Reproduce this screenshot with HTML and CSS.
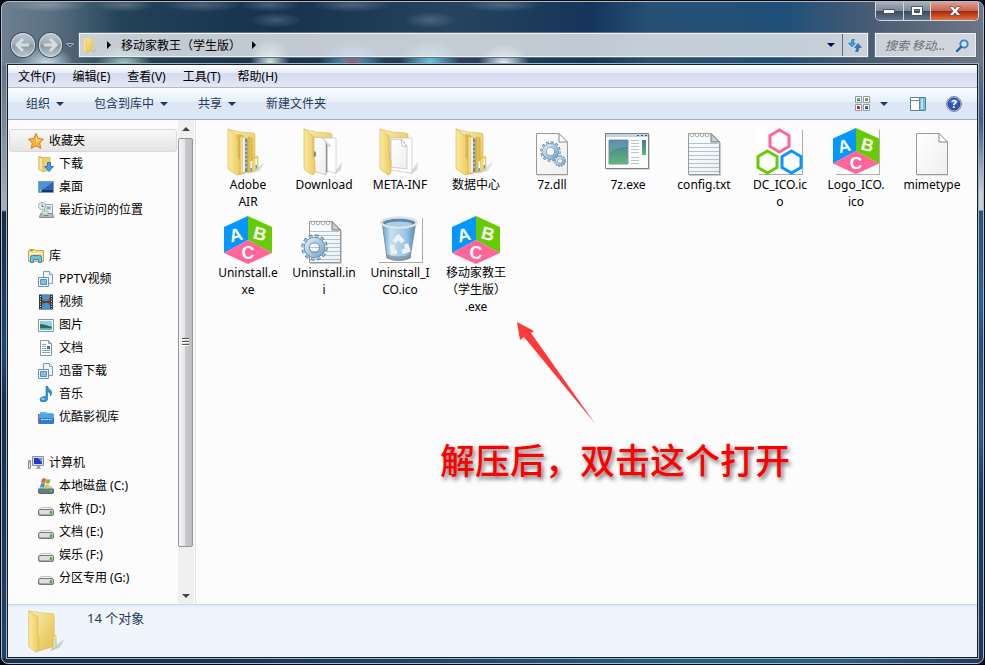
FILE: index.html
```html
<!DOCTYPE html>
<html lang="zh-CN">
<head>
    <meta charset="UTF-8">
    <meta name="viewport" content="width=device-width, initial-scale=1.0">
    <title>移动家教王（学生版）</title>
    <link rel="stylesheet" href="styles.css">
</head>
<body>
    <!-- Shared icons -->
    <svg class="sprite" aria-hidden="true">
        <defs>
            <linearGradient id="gFolder" x1="0" y1="0" x2="1" y2="1">
                <stop offset="0" stop-color="#fbeeb0"/><stop offset="1" stop-color="#e2bf4a"/>
            </linearGradient>
            <linearGradient id="gFront" x1="0" y1="0" x2="1" y2="0">
                <stop offset="0" stop-color="#fbeaa0"/><stop offset="1" stop-color="#ecca5f"/>
            </linearGradient>
            <linearGradient id="gPaper" x1="0" y1="0" x2="1" y2="1">
                <stop offset="0" stop-color="#ffffff"/><stop offset="1" stop-color="#eeeeee"/>
            </linearGradient>
            <linearGradient id="gBlue" x1="0" y1="0" x2="1" y2="1">
                <stop offset="0" stop-color="#d4e8f7"/><stop offset="1" stop-color="#7fa9cc"/>
            </linearGradient>
            <linearGradient id="gScreen" x1="0" y1="0" x2="0" y2="1">
                <stop offset="0" stop-color="#3c78a4"/><stop offset="1" stop-color="#62b876"/>
            </linearGradient>
            <linearGradient id="gBin" x1="0" y1="0" x2="1" y2="0">
                <stop offset="0" stop-color="#5f9ac6"/><stop offset=".25" stop-color="#c5dff1"/><stop offset=".7" stop-color="#9cc6e4"/><stop offset="1" stop-color="#5287b3"/>
            </linearGradient>
            <linearGradient id="gDrive" x1="0" y1="0" x2="0" y2="1">
                <stop offset="0" stop-color="#e8e8ec"/><stop offset="1" stop-color="#9c9ca4"/>
            </linearGradient>
        </defs>
        <symbol id="folder-full" viewBox="0 0 48 48">
            <path d="M26 44l15-10-5 9-10 3z" fill="#999" opacity=".25"/>
            <path d="M4 1l12 3 13 1q2 0 2 2v34l-12 5z" fill="url(#gFolder)" stroke="#dcb954" stroke-width=".6"/>
            <path d="M13 6l6 1v39l-5 1z" fill="#dfb94e"/>
            <path d="M16 8l4 1v36l-4 1z" fill="#f5de8b" stroke="#b8963a" stroke-width=".5"/>
            <path d="M19 9l2 1v34l-2 1z" fill="#fff" stroke="#aaa" stroke-width=".4"/>
            <path d="M21 10l2.500 1v33H21z" fill="#7d8790"/><path d="M22 14v28" stroke="#dde6ec" stroke-dasharray="2 2"/>
            <path d="M24 9l4 1v33l-4 2z" fill="#e3bd50" stroke="#b8963a" stroke-width=".4"/>
            <path d="M30 30l3-2 1 1v12l-6 3v-12z" fill="#f1d66f" stroke="#cfa83c" stroke-width=".5"/>
            <path d="M26.500 33h1.500v9l-1.500 1zM31.500 31H33v8l-1.500 1z" fill="#fff"/><path d="M26.500 40H28v3l-1.500 1zM31.500 37H33v3l-1.500 1z" fill="#4c9fe8"/>
            <path d="M4 1l9 7 1 5v16l2 3v11q0 4-3 4L4 41z" fill="url(#gFront)" stroke="#d5b452" stroke-width=".6"/>
        </symbol>
        <symbol id="folder-pages" viewBox="0 0 48 48">
            <path d="M36 42l6-8-1 8-7 5z" fill="#888" opacity=".3"/>
            <path d="M4 1l12 3 14 1q2 0 2 2v28H10z" fill="url(#gFolder)" stroke="#dcb954" stroke-width=".6"/>
            <path d="M22 10h14v35l-9-2z" fill="#fff" stroke="#bbb" stroke-width=".6"/>
            <path d="M14 9l9 1 3 4v33l-12-4z" fill="url(#gPaper)" stroke="#aaa" stroke-width=".6"/>
            <path d="M25 13l6 5-4 0z" fill="#eee" stroke="#aaa" stroke-width=".5"/>
            <path d="M26 15l1.500 2v27L26 46z" fill="#999"/>
            <path d="M14 25l2-1v4l-2 1z" fill="#4aab57"/><path d="M14 23l1.500 1-1.500 2z" fill="#e85b31"/>
            <path d="M4 1l9 7v22l2 3v10q0 4-3 4L4 41z" fill="url(#gFront)" stroke="#d5b452" stroke-width=".6"/>
        </symbol>
        <symbol id="folder-page" viewBox="0 0 48 48">
            <path d="M36 42l6-8-1 8-7 5z" fill="#888" opacity=".3"/>
            <path d="M4 1l12 3 14 1q2 0 2 2v28H10z" fill="url(#gFolder)" stroke="#dcb954" stroke-width=".6"/>
            <path d="M15 10h21v35l-22-3z" fill="#fff" stroke="#bbb" stroke-width=".6"/>
            <path d="M15 12l10-1 6 7v23l-16-2z" fill="url(#gPaper)" stroke="#bbb" stroke-width=".7"/>
            <path d="M25 11l1 7 5 1z" fill="#fff" stroke="#aaa" stroke-width=".6"/>
            <path d="M4 1l9 7v22l2 3v10q0 4-3 4L4 41z" fill="url(#gFront)" stroke="#d5b452" stroke-width=".6"/>
        </symbol>
        <symbol id="folder-plain" viewBox="0 0 48 48">
            <path d="M28 44l15-11-5 9-10 4z" fill="#777" opacity=".3"/>
            <path d="M4 2l12 2 14 1q2 0 2 2v34l-18 5z" fill="url(#gFolder)" stroke="#dcb954" stroke-width=".6"/>
            <path d="M30 31l3-3 1 2v12l-4 1z" fill="#f6df87" stroke="#cfa83c" stroke-width=".5"/><path d="M31 33h1.500v6L31 40z" fill="#fff" stroke="#6bb1e8" stroke-width=".5"/>
            <path d="M4 2l10 7v20l1 2v12q0 4-3 4L4 41z" fill="url(#gFront)" stroke="#d5b452" stroke-width=".6"/>
        </symbol>
        <symbol id="cube" viewBox="0 0 48 48">
            <path d="M24 0v24L0 37V11z" fill="#0397ff"/>
            <path d="M24 0l24 11v26L24 24z" fill="#66cc01"/>
            <path d="M24 24l24 13-24 11L0 37z" fill="#ff6599"/>
        </symbol>
        <symbol id="sheet" viewBox="0 0 48 48">
            <path d="M9 6h22l9 9v33H9z" fill="#bbb" opacity=".4"/>
            <path d="M8.500 5.500h22l9 9v32h-31z" fill="url(#gPaper)" stroke="#999"/>
            <path d="M31 5.500v8.500h8.500z" fill="#fff" stroke="#888"/>
        </symbol>
        <symbol id="notepad" viewBox="0 0 48 48">
            <path d="M9 6h23l9 9v33H9z" fill="#999" opacity=".5"/>
            <path d="M8.500 5.500h22l9 9v32h-31z" fill="url(#gPaper)" stroke="#999"/>
            <path d="M9 15.500h29M9 19.500h30M9 23.500h30M9 27.500h30M9 31.500h30M9 35.500h30M9 39.500h30M9 43.500h30" stroke="#a9c6d8"/>
            <path d="M31 5.500v8.500h8.500z" fill="#ccc" stroke="#777"/>
            <g fill="#fff" stroke="#999" stroke-width=".8"><circle cx="12" cy="7" r="1.800"/><circle cx="17" cy="7" r="1.800"/><circle cx="22" cy="7" r="1.800"/><circle cx="27" cy="7" r="1.800"/></g>
        </symbol>
        <symbol id="gear" viewBox="0 0 24 24">
            <circle cx="12" cy="12" r="10" fill="none" stroke="#55738e" stroke-width="3.400" stroke-dasharray="3 2.236"/>
            <circle cx="12" cy="12" r="9.800" fill="none" stroke="#a5c9e2" stroke-width="2.400" stroke-dasharray="2.600 2.531"/>
            <circle cx="12" cy="12" r="6.800" fill="none" stroke="#5c7d9a" stroke-width="5.200"/>
            <circle cx="12" cy="12" r="6.800" fill="none" stroke="url(#gBlue)" stroke-width="4.200"/>
        </symbol>
        <symbol id="library" viewBox="0 0 16 16">
            <path d="M5.500.5h6l3 3v9h-9z" fill="#edf4fa" stroke="#7c9cb8"/>
            <path d="M11.500.5v3h3" fill="#fff" stroke="#7c9cb8"/>
            <path d="M.5 6.500h10v9H.5z" fill="#f7fbfe" stroke="#6f93b4"/>
            <path d="M2.500 8.500h6v5h-6z" fill="#82bff0" stroke="#4f8fcb"/>
        </symbol>
        <symbol id="drive" viewBox="0 0 16 16">
            <path d="M3 6.500h10l2 3H1z" fill="#f5f5f7" stroke="#b5b5ba" stroke-width=".8"/>
            <rect x=".5" y="8.500" width="15" height="6" rx="1.500" fill="url(#gDrive)" stroke="#77777d"/>
            <path d="M2 10h9v3H2z" fill="#dedee5"/><path d="M12 10h2v3h-2z" fill="#36c321"/>
        </symbol>
        <symbol id="caret" viewBox="0 0 8 4"><path d="M0 0h8L4 4z" fill="currentColor"/></symbol>
    </svg>

    <div class="window">
        <header class="titlebar">
            <div class="window-buttons">
                <button class="win-btn" aria-label="最小化"><svg width="12" height="5"><rect x=".5" y=".5" width="11" height="4" fill="#fff" stroke="#4b5568"/></svg></button>
                <button class="win-btn" aria-label="最大化"><svg width="12" height="10"><path d="M.5.5h11v9H.5zM3.500 3.500v3h5v-3z" fill="#fff" fill-rule="evenodd" stroke="#4b5568"/></svg></button>
                <button class="win-btn close" aria-label="关闭"><svg width="12" height="10"><path d="M1 .5h3L6 3 8 .5h3v1L8 5l3 3.500v1H8L6 7 4 9.500H1v-1L4 5 1 1.500z" fill="#fff" stroke="#5d4652" stroke-width=".8"/></svg></button>
            </div>
            <div class="nav-row">
                <div class="travel">
                    <button class="round" aria-label="后退"><svg width="16" height="14"><path d="M8 1L2 7l6 6M3 7h11" fill="none" stroke="#d5dde2" stroke-width="3"/></svg></button>
                    <button class="round" aria-label="前进"><svg width="16" height="14"><path d="M8 1l6 6-6 6M13 7H2" fill="none" stroke="#d5dde2" stroke-width="3"/></svg></button>
                    <button class="history" aria-label="最近浏览"><svg width="8" height="5"><path d="M.5.5h7L4 4z" fill="#4c6070" stroke="#a3b0ba"/></svg></button>
                </div>
                <div class="address">
                    <svg class="address-icon" width="16" height="16" viewBox="0 0 40 48"><use href="#folder-plain" width="48" height="48"/></svg>
                    <svg class="chevron" width="4" height="8"><path d="M0 0l4 4-4 4z"/></svg>
                    <button class="crumb">移动家教王（学生版）</button>
                    <svg class="chevron" width="4" height="8"><path d="M0 0l4 4-4 4z"/></svg>
                    <button class="address-drop" aria-label="以前的位置"><svg width="8" height="4"><use href="#caret"/></svg></button>
                    <button class="refresh" aria-label="刷新"><svg width="14" height="13"><path d="M6.500 0L4 .5Q3 2 3.500 4H.5L4 8l3.500-4H5.500Q5.500 2 6.500 0z" fill="#3a9be0" stroke="#2263a8" stroke-width=".5"/><path d="M7.500 13l2.500-.5q1-1.500.5-4h3L10 4.500 6.500 8.500h2q0 2.500-1 4.500z" fill="#2f7ccb" stroke="#1c4b93" stroke-width=".5"/></svg></button>
                </div>
                <div class="search">
                    <input type="text" placeholder="搜索 移动..." aria-label="搜索">
                    <svg width="13" height="13"><circle cx="8" cy="5" r="3.700" fill="#d3e8f5" stroke="#2b84cf" stroke-width="1.800"/><path d="M5 8l-4 4" stroke="#1d63ad" stroke-width="2.400" stroke-linecap="round"/></svg>
                </div>
            </div>
        </header>

        <div class="frame">
            <nav class="menubar">
                <button>文件(F)</button>
                <button>编辑(E)</button>
                <button>查看(V)</button>
                <button>工具(T)</button>
                <button>帮助(H)</button>
            </nav>
            <div class="toolbar">
                <button>组织 <svg width="8" height="4"><use href="#caret"/></svg></button>
                <button>包含到库中 <svg width="8" height="4"><use href="#caret"/></svg></button>
                <button>共享 <svg width="8" height="4"><use href="#caret"/></svg></button>
                <button>新建文件夹</button>
                <div class="view-tools">
                    <button aria-label="更改视图"><svg width="15" height="15"><g fill="#fff" stroke="#8e99a5"><path d="M.5.5h6v6h-6zM8.500.5h6v6h-6zM.5 8.500h6v6h-6zM8.500 8.500h6v6h-6z"/></g><path d="M2 2h3v3H2z" fill="#63b6a5"/><path d="M2 4h3v1H2z" fill="#176c45"/><path d="M10 2h3v3h-3z" fill="#5aa929"/><path d="M10 2h2v1h-2z" fill="#e6a02b"/><path d="M2 10h3v3H2z" fill="#a42b12"/><path d="M4 10h1v1H4z" fill="#f0b83c"/><path d="M10 10h3v3h-3z" fill="#3b78b8"/><path d="M10 12h3v1h-3z" fill="#222f56"/></svg></button>
                    <button class="view-drop" aria-label="更多选项"><svg width="8" height="4"><use href="#caret"/></svg></button>
                    <button class="preview" aria-label="显示预览窗格"><svg width="16" height="14"><path d="M.5.5h15v13H.5z" fill="#fff" stroke="#5b8199"/><path d="M10 1h5v12h-5z" fill="#6fc1de"/><path d="M11 2h2v10h-2z" fill="#b6e6f4"/><path d="M1 3.500h9M9.500 1v12" stroke="#6c899c"/></svg></button>
                    <button aria-label="获取帮助"><svg width="16" height="16"><circle cx="8" cy="8" r="7.500" fill="#d8dce5" stroke="#7c8496"/><circle cx="8" cy="8" r="6" fill="#2857bd" stroke="#183a8c"/><path d="M3 6q5-6 10 0-5 3-10 0z" fill="#7ba5e8" opacity=".6"/><text class="help-mark" x="8" y="12">?</text></svg></button>
                </div>
            </div>

            <div class="main">
                <aside class="sidebar">
                    <ul class="group">
                        <li><a class="root selected" href="#"><svg width="16" height="16"><path d="M8 .5l2.300 5 5.200.7-3.800 3.700 1 5.500L8 12.800l-4.700 2.600 1-5.500L.5 6.200l5.200-.7z" fill="#f9b43a" stroke="#d97d24"/><path d="M8 3l1.500 3.500 3 .6L8 9z" fill="#fde9a0"/></svg>收藏夹</a></li>
                        <li><a href="#"><svg width="16" height="16"><path d="M1 .5l4 1h7v13l-7 1-4-2z" fill="#efcf6c" stroke="#cfa94a" stroke-width=".7"/><path d="M1 .5l4 3v12l-4-2z" fill="#fbe9a2" stroke="#cfa94a" stroke-width=".7"/><path d="M9.500 6.500h3v4h3L11 15.500 6.500 10.500h3z" fill="#3d9fe6" stroke="#2168b0" stroke-width=".8"/></svg>下载</a></li>
                        <li><a href="#"><svg width="16" height="16"><path d="M.5 2.500h15v11H.5z" fill="#2a63b8" stroke="#8c9db3"/><path d="M1 3h14L4 11H1z" fill="#4f90dc"/><path d="M1 11h14v2H1z" fill="#20304f"/><path d="M1 10h3v3H1z" fill="#36a3d8"/><path d="M2 11h1v1H2z" fill="#ffd84a"/></svg>桌面</a></li>
                        <li><a href="#"><svg width="16" height="16"><path d="M6.500 2.500h8v9h-8z" fill="#e9eef2" stroke="#99a1a8"/><path d="M8.500 4.500h4v3h-4z" fill="#69b3da"/><path d="M2.500 11.500h12l1 4h-14z" fill="#b2b8bd" stroke="#858b90"/><path d="M4 9h6v4H4z" fill="#d8dde0" stroke="#959b9f" stroke-width=".6"/><path d="M6 13.500h4" stroke="#35b15c"/><circle cx="4" cy="4" r="3.500" fill="#f6f8f9" stroke="#9ba3aa"/><path d="M4 2v2.500h2" fill="none" stroke="#67707a"/></svg>最近访问的位置</a></li>
                    </ul>
                    <ul class="group">
                        <li><a class="root" href="#"><svg width="16" height="16"><path d="M.5 2.500l1-1h5l1 1h8v11H.5z" fill="#f2dc87" stroke="#c6a94f"/><path d="M2 2.500h3" stroke="#52ae3e"/><path d="M1 5.500h14" stroke="#fff6c9"/><path d="M2.500 14.500v-5q0-2 2-2h7q2 0 2 2v5h-3v-3h-5v3z" fill="#70bde6" stroke="#3c87bb"/></svg>库</a></li>
                        <li><a href="#"><svg width="16" height="16"><use href="#library"/></svg>PPTV视频</a></li>
                        <li><a href="#"><svg width="16" height="16"><path d="M1 .5h14v15H1z" fill="#303940"/><path d="M4 1h8v14H4z" fill="#3d96cc"/><path d="M4 4l4 4-4 3zM12 3L8 8l4 3z" fill="#ac5138"/><path d="M4 8h8" stroke="#222"/><path d="M2.500 2v13M13.500 2v13" stroke="#e9edf0" stroke-dasharray="1 1.500"/></svg>视频</a></li>
                        <li><a href="#"><svg width="16" height="16"><path d="M.5 2.500h15v12H.5z" fill="#fff" stroke="#8a9297"/><path d="M2 4h12v9H2z" fill="#8fd0ee"/><path d="M2 7q4 0 12 3v2H2z" fill="#28724d"/><path d="M2 11h12v2H2z" fill="#5fb2c3"/></svg>图片</a></li>
                        <li><a href="#"><svg width="16" height="16"><path d="M2.500.5h8l3 3v12h-11z" fill="#fff" stroke="#8996a0"/><path d="M10.500.5v3h3" fill="none" stroke="#8996a0"/><path d="M4 4.500h4M4 6.500h4M4 8.500h4M4 10.500h8M4 12.500h8" stroke="#8fa5bd"/><path d="M9 6h3v3H9z" fill="#2e74b5"/></svg>文档</a></li>
                        <li><a href="#"><svg width="16" height="16"><use href="#library"/></svg>迅雷下载</a></li>
                        <li><a href="#"><svg width="16" height="16"><path d="M8 0h1.500q.5 3 3 4 2.500 2.500 0 6 .5-3.500-3-4.500V13q0 2.500-4 3-3.500 0-3.500-2.500T6 10.500h2z" fill="#2b91da" stroke="#1c68ae" stroke-width=".6"/><ellipse cx="5" cy="13" rx="2" ry="1.300" fill="#76c5f2"/></svg>音乐</a></li>
                        <li><a href="#"><svg width="16" height="16"><path d="M2 3h6l1 1h6v6H2z" fill="#56b6ed"/><path d="M0 5h16v9q0 1-1 1H1q-1 0-1-1z" fill="#2b7dd6"/><path d="M1 5h15v4H1z" fill="#4ea3ea"/><path d="M0 6h1v8H0z" fill="#e3474c"/><path d="M3 10.500h11" stroke="#c5e5ff" stroke-dasharray="2 .5"/></svg>优酷影视库</a></li>
                    </ul>
                    <ul class="group">
                        <li><a class="root" href="#"><svg width="16" height="16"><path d="M4.500 1.500h11v9h-11z" fill="#d8dce0" stroke="#878f98"/><path d="M6 3h8v6H6z" fill="#1b3cc4"/><path d="M10 3h4v5z" fill="#6d94ee"/><path d="M9 11h3v2l2 1H7l2-1z" fill="#9da5ad"/><path d="M.5 5.500h2v8h-2z" fill="#dfe3e6" stroke="#858d95"/><path d="M1 7h1" stroke="#35b52b"/></svg>计算机</a></li>
                        <li><a href="#"><svg width="16" height="16"><rect x=".5" y="10.500" width="15" height="5" rx="1" fill="#587d91" stroke="#5b666e"/><path d="M2 8h12l1 2.500H1z" fill="#cbd0d4"/><path d="M12 12h2v2h-2z" fill="#42d02f"/><path d="M4 1q2-1.500 4 0L7 5Q5 4 3 5z" fill="#e65c2c"/><path d="M8.500 1q2 1 4 0l-1 4q-2 1-4 0z" fill="#79ba32"/><path d="M3 5.500q2-1 4 0L6 9.500q-2-1-4 0z" fill="#3e91d9"/><path d="M7.500 6q2 1 4 0l-1 4q-2 1-4 0z" fill="#f5c42d"/></svg>本地磁盘 (C:)</a></li>
                        <li><a href="#"><svg width="16" height="16"><use href="#drive"/></svg>软件 (D:)</a></li>
                        <li><a href="#"><svg width="16" height="16"><use href="#drive"/></svg>文档 (E:)</a></li>
                        <li><a href="#"><svg width="16" height="16"><use href="#drive"/></svg>娱乐 (F:)</a></li>
                        <li><a href="#"><svg width="16" height="16"><use href="#drive"/></svg>分区专用 (G:)</a></li>
                    </ul>
                </aside>
                <div class="scrollbar">
                    <button aria-label="向上滚动"><svg width="8" height="4"><path d="M0 4h8L4 0z" fill="#444"/></svg></button>
                    <div class="track"><div class="thumb"><i></i><i></i><i></i></div></div>
                    <button aria-label="向下滚动"><svg width="8" height="4"><path d="M0 0h8L4 4z" fill="#444"/></svg></button>
                </div>

                <section class="content">
                    <ul class="files">
                        <li><svg><use href="#folder-full"/></svg><span>Adobe<br>AIR</span></li>
                        <li><svg><use href="#folder-pages"/></svg><span>Download</span></li>
                        <li><svg><use href="#folder-page"/></svg><span>META-INF</span></li>
                        <li><svg><use href="#folder-full"/></svg><span>数据中心</span></li>
                        <li><svg><use href="#sheet"/><use href="#gear" x="12" y="13" width="21" height="21"/><use href="#gear" x="26" y="27" width="12" height="12"/></svg><span>7z.dll</span></li>
                        <li><svg><path d="M3 7h43v35H3z" fill="#888" opacity=".35"/><path d="M1.500 5.500h43v35h-43z" fill="#fbfcfd" stroke="#74838f"/><path d="M2 6h42v3H2z" fill="#c5d2df"/><path d="M33 7.500h10" stroke="#36568c" stroke-dasharray="2 2"/><path d="M5 12h19v24H5z" fill="url(#gScreen)" stroke="#7e98a3"/><path d="M6 13h17v6Q12 19 6 24z" fill="#fff" opacity=".15"/><path d="M27 12.500h8M27 15.500h8M27 18.500h8M27 21.500h8M27 24.500h8M27 29.500h8M27 32.500h8M27 35.500h8" stroke="#c0c4c8"/><path d="M38 12h4v15h-4z" fill="url(#gScreen)"/></svg><span>7z.exe</span></li>
                        <li><svg><use href="#notepad"/></svg><span>config.txt</span></li>
                        <li><svg><path d="M3 46.500h44M46.500 2v45" stroke="#aaa"/><path d="M1 1h44v44H1z" fill="#fff" opacity=".7"/><path d="M23.500 2l9.500 5.500v11L23.500 24 14 18.500v-11z" fill="#fff" stroke="#ff6599" stroke-width="3"/><path d="M11.500 23l9.500 5.500v11L11.500 45 2 39.500v-11z" fill="#fff" stroke="#66cc01" stroke-width="3"/><path d="M35.500 23l9.500 5.500v11L35.500 45 26 39.500v-11z" fill="#fff" stroke="#0397ff" stroke-width="3"/></svg><span>DC_ICO.ic<br>o</span></li>
                        <li><svg viewBox="-1 0 50 50"><path d="M3 48.500h45M48.500 2v47" stroke="#aaa"/><use href="#cube" width="48" height="48"/><g class="cube-letters"><text x="12" y="25" transform="rotate(-14 12 20)">A</text><text x="36" y="24" transform="rotate(14 36 18)">B</text><text x="24" y="43">C</text></g></svg><span>Logo_ICO.<br>ico</span></li>
                        <li><svg><use href="#sheet"/></svg><span>mimetype</span></li>
                        <li><svg viewBox="0 0 48 48"><use href="#cube"/><g class="cube-letters"><text x="12" y="25" transform="rotate(-14 12 20)">A</text><text x="36" y="24" transform="rotate(14 36 18)">B</text><text x="24" y="43">C</text></g></svg><span>Uninstall.e<br>xe</span></li>
                        <li><svg><use href="#notepad" x="1" width="48" height="48"/><use href="#gear" x="1" y="18" width="27" height="27"/></svg><span>Uninstall.in<br>i</span></li>
                        <li><svg><path d="M3 46.500h44M46.500 2v45" stroke="#aaa"/><path d="M6 5l5 37q12 5 23 0l6-37z" fill="url(#gBin)" stroke="#7c94a6"/><path d="M10 38q13 5 25 0v4q-11 5-24 0z" fill="#7c8b96" opacity=".7"/><ellipse cx="23" cy="6.500" rx="17.500" ry="5" fill="#5d86aa" stroke="#d9e2e8" stroke-width="2.500"/><ellipse cx="23" cy="8" rx="13" ry="2.500" fill="#a8cde7"/><g fill="none" stroke="#f0f1ec" stroke-width="4.500"><path d="M18 26l4.500-5 4.500 5"/><path d="M30 28l2 6-6 2"/><path d="M21 36h-4l-1-7"/></g></svg><span>Uninstall_I<br>CO.ico</span></li>
                        <li><svg viewBox="0 0 48 48"><use href="#cube"/><g class="cube-letters"><text x="12" y="25" transform="rotate(-14 12 20)">A</text><text x="36" y="24" transform="rotate(14 36 18)">B</text><text x="24" y="43">C</text></g></svg><span>移动家教王<br>（学生版）<br>.exe</span></li>
                    </ul>
                    <div class="callout">
                        <svg width="80" height="104"><path d="M1 1l17 9-3 2 64 90.500L8 16l-4 3z" fill="#fd3a39"/></svg>
                        <p>解压后，双击这个打开</p>
                    </div>
                </section>
            </div>

            <footer class="details">
                <svg width="44" height="44"><use href="#folder-plain"/></svg>
                <p>14 个对象</p>
            </footer>
        </div>
    </div>
</body>
</html>
```

FILE: styles.css
```css
* {
    box-sizing: border-box;
}
body {
    margin: 0;
    padding: 1px;
    height: 100vh;
    background: #03060f;
    font-family: "Noto Sans", "Noto Sans CJK SC", sans-serif;
    font-size: 12px;
    line-height: 17px;
    color: #000;
}
ul, p {
    margin: 0;
    padding: 0;
    list-style: none;
}
button {
    margin: 0;
    padding: 0;
    border: none;
    background: none;
    font: inherit;
    color: inherit;
    white-space: nowrap;
}
svg {
    display: block;
    flex: none;
}
.sprite {
    position: absolute;
    width: 0;
    height: 0;
}

/* Window glass */
.window {
    display: flex;
    flex-direction: column;
    height: 100%;
    padding: 0 4px 4px;
    border: 1px solid #aebbc8;
    border-radius: 7px;
    background:
        radial-gradient(ellipse 28px 18px at 44px 62px, #cfe0ea, transparent),
        radial-gradient(ellipse 28px 18px at 122px 62px, #a5d2c5, transparent),
        radial-gradient(ellipse 20px 24px at 268px 60px, #d5e3dc, transparent),
        radial-gradient(ellipse 12px 10px at 350px 62px, #b4425b, transparent),
        radial-gradient(ellipse 34px 24px at 350px 62px, #58a8d8, transparent),
        radial-gradient(ellipse 30px 22px at 428px 60px, #6ac5e6, transparent),
        radial-gradient(ellipse 26px 20px at 502px 62px, #eef5ff, transparent),
        radial-gradient(ellipse 26px 8px at 274px 18px, rgba(150, 165, 185, .35), transparent),
        radial-gradient(ellipse 26px 8px at 428px 18px, rgba(150, 165, 185, .35), transparent),
        radial-gradient(ellipse 40px 7px at 46px 3px, rgba(190, 200, 210, .4), transparent),
        radial-gradient(ellipse 30px 7px at 122px 3px, rgba(170, 180, 195, .4), transparent),
        radial-gradient(ellipse 40px 7px at 200px 3px, rgba(150, 160, 180, .4), transparent),
        radial-gradient(ellipse 30px 7px at 268px 3px, rgba(150, 160, 180, .4), transparent),
        radial-gradient(ellipse 40px 7px at 350px 3px, rgba(150, 160, 180, .4), transparent),
        radial-gradient(ellipse 40px 7px at 500px 3px, rgba(150, 160, 180, .4), transparent),
        linear-gradient(90deg, #6d7f90 0, #5a7082 50px, #234257 120px, #16324d 28%, #26445f 46%, #14365a 60%, #265074 66%, #1f5078 80%, #4d5c74 89%, #6b7788) 0 0 / 100% 64px no-repeat,
        linear-gradient(#5f6f86 64px, #3f6186 120px, #c3cfdb 190px, #c3cfdb 208px, #265680 209px, #2a6494 300px, #1c5183 340px, #2a5f8f 430px, #124069 490px, #1f3a5c) 100% 0 / 5px 100% no-repeat,
        linear-gradient(90deg, #17324e 20%, #1f608f 70%, #25628e 85%, #1f3a5c) 0 100% / 100% 5px no-repeat,
        linear-gradient(#5f7282 64px, #a8b0bb 208px, #142c45 210px, #1c4a76 350px, #13304d 400px, #1d4568);
    overflow: hidden;
}
.titlebar {
    flex: none;
}
.window-buttons {
    display: flex;
    width: 104px;
    height: 19px;
    margin-left: auto;
    border: 1px solid #d3d9df;
    border-top: none;
    border-radius: 0 0 5px 5px;
    overflow: hidden;
}
.win-btn {
    display: flex;
    flex: 1;
    align-items: center;
    justify-content: center;
    border-right: 1px solid #d3d9df;
    background: linear-gradient(#a8b0bb, #7b8796 50%, #3c4a5e 50%, #65748a);
}
.win-btn.close {
    flex: none;
    width: 47px;
    border: none;
    background: linear-gradient(#d9a097, #c9634c 50%, #a92409 50%, #df7141);
}
.nav-row {
    display: flex;
    align-items: center;
    gap: 5px;
    height: 26px;
    margin: 11px 3px 5px 5px;
}
.travel {
    display: flex;
    align-items: center;
    gap: 4px;
    width: 63px;
}
.round {
    display: flex;
    align-items: center;
    justify-content: center;
    width: 24px;
    height: 24px;
    border: 1px solid #d2dae0;
    border-radius: 50%;
    background: linear-gradient(#bcc6ce, #9ba8b3 50%, #8797a2 50%, #b9c4cb);
    box-shadow: 0 0 0 1px #384c5d;
}
.history {
    padding: 2px 0;
}
.address,
.search {
    display: flex;
    align-items: center;
    height: 24px;
    border: 1px solid #eef2f5;
    outline: 1px solid #60717e;
    background: rgba(236, 239, 242, .8);
}
.address {
    flex: 1;
    padding-left: 1px;
}
.address-icon {
    margin-right: 10px;
}
.crumb {
    margin: 0 11px 0 10px;
}
.address-drop {
    display: flex;
    align-items: center;
    justify-content: center;
    width: 22px;
    height: 100%;
    margin-left: auto;
    color: #000b5a;
}
.refresh {
    display: flex;
    align-items: center;
    justify-content: center;
    width: 25px;
    height: 100%;
    border-left: 1px solid #60717e;
}
.search {
    width: 101px;
    margin-left: 2px;
    padding: 0 6px 0 9px;
}
.search input {
    flex: 1;
    min-width: 0;
    padding: 0;
    border: none;
    outline: none;
    background: none;
    font: inherit;
    font-style: italic;
}
.search input::placeholder {
    color: #686e74;
}

/* Client area */
.frame {
    display: flex;
    flex: 1;
    flex-direction: column;
    min-height: 0;
    margin: 1px;
    border: 1px solid #14202e;
    outline: 1px solid #9fb0bf;
    background: #fcfcfc;
}
.menubar {
    display: flex;
    gap: 17px;
    height: 23px;
    padding: 0 10px;
    border-bottom: 1px solid #b1b8d1;
    background: linear-gradient(#fff, #e7ebf5 8px, #d5daee 8px, #e2e6f5);
}
.toolbar {
    display: flex;
    align-items: center;
    gap: 30px;
    height: 32px;
    padding: 0 15px 0 18px;
    border-bottom: 1px solid #a0afc3;
    background: linear-gradient(#fafdff, #e6f0fa 14px, #dce6f4 14px, #dde8f6);
    color: #1e395b;
}
.toolbar button {
    display: flex;
    align-items: center;
    gap: 6px;
}
.view-tools {
    display: flex;
    align-items: center;
    gap: 10px;
    margin-left: auto;
}
.view-tools .preview {
    margin: 0 10px 0 12px;
}
.main {
    display: flex;
    flex: 1;
    min-height: 0;
}

/* Navigation pane */
.sidebar {
    display: flex;
    flex-direction: column;
    gap: 23px;
    width: 170px;
    padding: 9px 1px 0;
    overflow: hidden;
}
.sidebar a {
    display: flex;
    align-items: center;
    gap: 5px;
    height: 23px;
    padding-left: 29px;
    color: #000;
    text-decoration: none;
    white-space: nowrap;
}
.sidebar a.root {
    padding-left: 19px;
}
.sidebar a.selected {
    padding-left: 18px;
    border: 1px solid #d9d9d9;
    border-radius: 3px;
    background: linear-gradient(#f8f8f8, #e5e5e5);
}
.scrollbar {
    display: flex;
    flex-direction: column;
    width: 16px;
    background: #f0f0f0;
}
.scrollbar button {
    display: flex;
    align-items: center;
    justify-content: center;
    height: 17px;
}
.track {
    flex: 1;
    padding-top: 1px;
}
.thumb {
    display: flex;
    flex-direction: column;
    align-items: center;
    justify-content: center;
    gap: 1px;
    width: 15px;
    height: 91%;
    border: 1px solid #969696;
    border-radius: 2px;
    background: linear-gradient(90deg, #f5f5f5, #e4e4e6 45%, #cacace 50%, #bbbbc0);
}
.thumb i {
    width: 7px;
    height: 2px;
    border-top: 1px solid #555;
    background: #fff;
}

/* File list */
.content {
    position: relative;
    flex: 1;
    margin-left: 1px;
    padding: 8px 6px 0 14px;
    border-left: 1px solid #d6e5f5;
}
.files {
    display: grid;
    grid-template-columns: repeat(auto-fill, 76px);
    grid-auto-rows: minmax(88px, auto);
}
.files li {
    display: flex;
    flex-direction: column;
    align-items: center;
    text-align: center;
    white-space: nowrap;
}
.files svg {
    width: 48px;
    height: 48px;
}
.cube-letters {
    fill: #fff;
    font-family: "Liberation Sans", sans-serif;
    font-size: 18px;
    font-weight: bold;
    text-anchor: middle;
}
.help-mark {
    fill: #fff;
    font-size: 11px;
    font-weight: bold;
    text-anchor: middle;
}

/* Red note drawn over the file list */
.callout {
    position: absolute;
    left: 244px;
    top: 201px;
    color: #f00;
    font-size: 35px;
    font-weight: 500;
    line-height: 48px;
    white-space: nowrap;
}
.callout svg {
    margin-left: 76px;
}
.callout p {
    margin-top: 12px;
    text-shadow: 2px 3px 4px rgba(0, 0, 0, .55);
}

/* Details pane */
.details {
    display: flex;
    gap: 18px;
    height: 53px;
    padding: 4px 17px 0;
    border-top: 1px solid #c8d9ea;
    background: linear-gradient(#e4ecf7, #f0f4fc 4px);
    color: #1e395b;
}
.details p {
    padding-top: 1px;
    font-size: 13px;
}
```
